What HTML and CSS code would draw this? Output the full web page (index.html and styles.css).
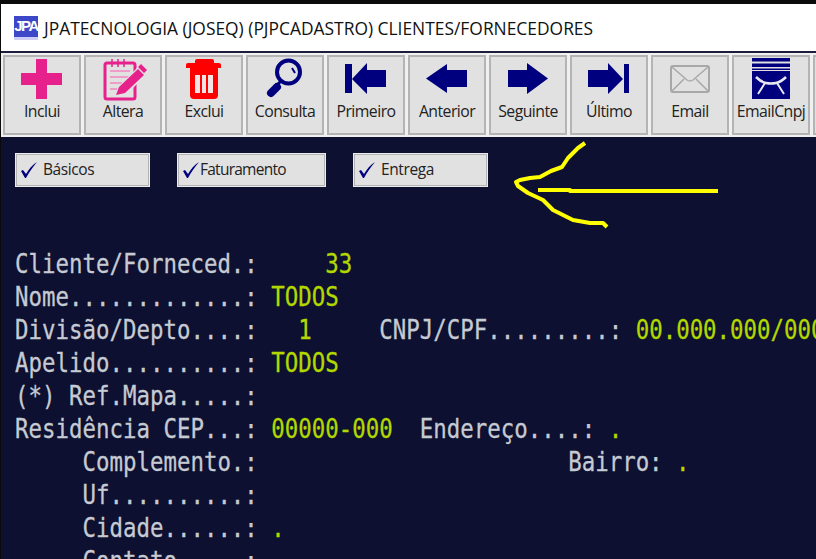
FILE: index.html
```html
<!DOCTYPE html>
<html lang="pt">
<head>
<meta charset="utf-8">
<title>Clientes/Fornecedores</title>
<link rel="stylesheet" href="styles.css">
</head>
<body>
<div class="window">
  <header class="titlebar">
    <div class="logo"><span>JPA</span></div>
    <h1 class="title">JPATECNOLOGIA (JOSEQ) (PJPCADASTRO) CLIENTES/FORNECEDORES</h1>
  </header>
  <nav class="toolbar">
    <div class="tool">
      <svg class="icon" viewBox="0 0 60 44"><path class="pink" d="M24 2h11v14h15v12H35v14H24V28H9V16h15z"/></svg>
      <span>Inclui</span>
    </div>
    <div class="tool">
      <svg class="icon" viewBox="0 0 60 44">
        <path class="pink-line" d="M14 6h26a2 2 0 0 1 2 2v32a2 2 0 0 1-2 2H14a2 2 0 0 1-2-2V8a2 2 0 0 1 2-2z"/>
        <path class="pink-thin" d="M19 2v8M25 2v8M31 2v8"/>
        <path class="pink-soft" d="M17 14h20M17 20h20M17 26h12M17 32h7"/>
        <path class="pencil-edge" d="M22 40l3-10 19-19 8 8-19 19z"/>
        <path class="pink" d="M23 38l3-8 19-18 6 6-19 18zM45 10l3-3 6 6-3 3z"/>
      </svg>
      <span>Altera</span>
    </div>
    <div class="tool">
      <svg class="icon" viewBox="0 0 60 44">
        <path class="red" d="M23 2h15a2 2 0 0 1 2 2v2h5a2 2 0 0 1 2 2v3H12V8a2 2 0 0 1 2-2h7V4a2 2 0 0 1 2-2z"/>
        <path class="red" d="M16 11h28v27a4 4 0 0 1-4 4H20a4 4 0 0 1-4-4z"/>
        <path class="slot" d="M21 18h5v18h-5zM28 18h4v18h-4zM34 18h5v18h-5z"/>
      </svg>
      <span>Exclui</span>
    </div>
    <div class="tool">
      <svg class="icon" viewBox="0 0 60 44">
        <circle class="navy-line" cx="33.5" cy="15" r="11.5"/>
        <path class="navy-thin" d="M37 11l3 5"/>
        <path class="navy-neck" d="M26 24l-6 6"/>
        <path class="navy-handle" d="M22 30l-6 6"/>
      </svg>
      <span>Consulta</span>
    </div>
    <div class="tool">
      <svg class="icon" viewBox="0 0 60 44"><path class="navy" d="M9 7h7v29H9zM16 22L31 6v7h19v17H31v7z"/></svg>
      <span>Primeiro</span>
    </div>
    <div class="tool">
      <svg class="icon" viewBox="0 0 60 44"><path class="navy" d="M9 21.5L30 7v6h20v17H30v6z"/></svg>
      <span>Anterior</span>
    </div>
    <div class="tool">
      <svg class="icon" viewBox="0 0 60 44"><path class="navy" d="M10 13h19V6l21 15.5L29 37v-7H10z"/></svg>
      <span>Seguinte</span>
    </div>
    <div class="tool">
      <svg class="icon" viewBox="0 0 60 44"><path class="navy" d="M9 13h20V6l15 16-15 15v-7H9zM45 7h5v29h-5z"/></svg>
      <span>Último</span>
    </div>
    <div class="tool">
      <svg class="icon" viewBox="0 0 60 44">
        <rect class="gray-line" x="11" y="9" width="38" height="26" rx="2"/>
        <path class="gray-thin" d="M12 10l15 13q3 2 6 0l15-13M12 34l12-12M48 34L36 22"/>
      </svg>
      <span>Email</span>
    </div>
    <div class="tool">
      <svg class="icon" viewBox="0 0 60 44">
        <path class="navy" d="M11 1h38v3.500H11zM11 6.500h38V10H11zM11 11.500h38V13H11zM11 14h38v28H11z"/>
        <path class="white-wide" d="M15 20q5 5 10 6 5 1 10 0 5-1 10-6"/>
        <path class="white-thin" d="M24 26l-7 11M36 26l7 11"/>
      </svg>
      <span>EmailCnpj</span>
    </div>
    <div class="tool"></div>
  </nav>
  <main class="screen">
    <div class="tabs">
      <label class="tab tab-basic"><svg class="check" viewBox="0 0 18 18"><path d="M1 10l2-1 3 4C9 8 12 4 17 1 13 6 9 11 6 17H5z"/></svg><span>Básicos</span></label>
      <label class="tab tab-fat"><svg class="check" viewBox="0 0 18 18"><path d="M1 10l2-1 3 4C9 8 12 4 17 1 13 6 9 11 6 17H5z"/></svg><span class="tight">Faturamento</span></label>
      <label class="tab tab-ent"><svg class="check" viewBox="0 0 18 18"><path d="M1 10l2-1 3 4C9 8 12 4 17 1 13 6 9 11 6 17H5z"/></svg><span>Entrega</span></label>
    </div>
<pre class="term">Cliente/Forneced.:     <b>33</b>
Nome.............: <b>TODOS</b>
Divisão/Depto....:   <b>1</b>     CNPJ/CPF.........: <b>00.000.000/0000-00</b>
Apelido..........: <b>TODOS</b>
(*) Ref.Mapa.....:
Residência CEP...: <b>00000-000</b>  Endereço....: <b>.</b>
     Complemento.:                       Bairro: <b>.</b>
     Uf..........:
     Cidade......: <b>.</b>
     Contato.....:</pre>
    <svg class="scribble" viewBox="0 0 816 559">
      <path d="M585 143L578 148 573 153 568 158 562 167 551 171 540 177 530 178 520 180 516 182 518 186 528 193 543 200 553 210 573 220 590 223 603 223 607 227"/>
      <path d="M538 190L570 190 570 191 718 191"/>
    </svg>
  </main>
</div>
</body>
</html>
```

FILE: styles.css
```css
* { box-sizing: border-box; }
html, body { margin: 0; height: 100%; overflow: hidden; background: #0d1030; }
.window {
  height: 559px;
  display: flex;
  flex-direction: column;
  border-top: 4px solid #0a0a0a;
  border-left: 1px solid #0a0a0a;
  font-family: "Open Sans", "Liberation Sans", sans-serif;
}
.titlebar {
  height: 47px;
  flex: none;
  display: flex;
  align-items: center;
  gap: 6px;
  padding: 1px 0 0 13px;
  background: #fff;
}
.logo {
  width: 24px;
  height: 24px;
  background: #3d48c8;
  color: #fff;
  font: bold 15px/20px "Liberation Sans", sans-serif;
  letter-spacing: -1.500px;
  text-align: center;
  overflow: hidden;
  border-bottom: 3px solid #cdd0f4;
}
.title {
  margin: 0;
  font-size: 17.400px;
  font-weight: 400;
  color: #111;
  white-space: nowrap;
}
.toolbar {
  height: 86px;
  flex: none;
  display: flex;
  gap: 3px;
  padding: 2px 0 0 2px;
  background: #f0f0f0;
  border-top: 2px solid #1c1c3c;
  overflow: hidden;
}
.tool {
  width: 78px;
  height: 80px;
  flex: none;
  display: flex;
  flex-direction: column;
  align-items: center;
  border: 2px solid #b4b4b4;
  background: #e1e1e1;
  font-size: 15.800px;
  letter-spacing: -0.550px;
  color: #222;
}
.icon { width: 60px; height: 44px; flex: none; }
.tool span { line-height: 20px; white-space: nowrap; }
.pink { fill: #e6218c; }
.pink-line { fill: #e1e1e1; stroke: #e6218c; stroke-width: 3; }
.pink-thin { fill: none; stroke: #e6218c; stroke-width: 1.500; }
.pink-soft { fill: none; stroke: #f09cc8; stroke-width: 2; }
.pencil-edge { fill: #e1e1e1; }
.red { fill: #f00; }
.slot { fill: #f2e4e4; }
.navy { fill: #00007f; }
.navy-line { fill: none; stroke: #00007f; stroke-width: 4; }
.navy-thin { fill: none; stroke: #00007f; stroke-width: 2; }
.navy-neck { fill: none; stroke: #00007f; stroke-width: 3; }
.navy-handle { fill: none; stroke: #00007f; stroke-width: 8; stroke-linecap: round; }
.gray-line { fill: none; stroke: #a8a8a8; stroke-width: 2; }
.gray-thin { fill: none; stroke: #a8a8a8; stroke-width: 1.500; }
.white-wide { fill: none; stroke: #e8e8f4; stroke-width: 2.500; }
.white-thin { fill: none; stroke: #e8e8f4; stroke-width: 2; }
.screen {
  position: relative;
  flex: 1;
  min-height: 0;
  overflow: hidden;
  background: #0d1030;
  padding: 16px 0 0 14px;
}
.tabs { display: flex; gap: 27px; }
.tab {
  height: 34px;
  display: flex;
  align-items: center;
  padding-bottom: 2px;
  background: #e1e1e1;
  border: 2px solid #b4b4b4;
  outline: 1px solid #ececec;
  outline-offset: -1px;
  font-size: 15.500px;
  letter-spacing: -0.400px;
  color: #222;
}
.tab-basic { width: 135px; }
.tab-fat { width: 149px; }
.tab-ent { width: 135px; }
.check { width: 18px; height: 18px; margin: 2px 5px 0 3px; fill: #00007f; flex: none; }
.tight { margin-left: -5px; letter-spacing: -0.750px; }
.term {
  margin: 60px 0 0;
  width: 1200px;
  font: 27px/33px "DejaVu Sans Mono", monospace;
  color: #c6cad2;
  -webkit-text-stroke: 0.300px currentColor;
  transform: scaleX(.83);
  transform-origin: left top;
}
.term b { font-weight: 400; color: #b2d800; }
.scribble {
  position: absolute;
  left: -1px;
  top: -137px;
  width: 816px;
  height: 559px;
  fill: none;
  stroke: #ff0;
  stroke-width: 4;
  stroke-linejoin: round;
}
```
